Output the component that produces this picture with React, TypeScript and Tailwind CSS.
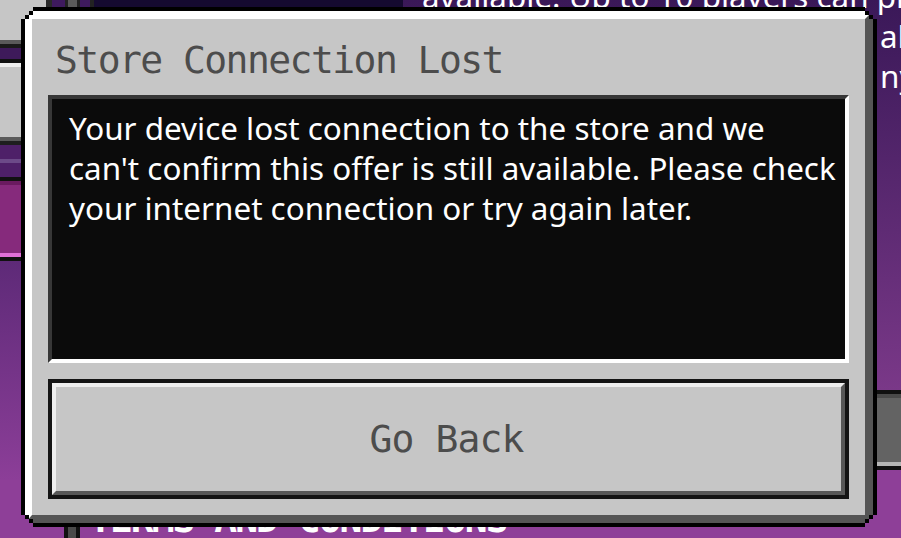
import React from 'react';

const pixelFont = "font-['DejaVu_Sans_Mono','Liberation_Mono',monospace]";
const bodyFont = "font-['Noto_Sans','Open_Sans',sans-serif]";

function SideMenu() {
  return (
    <div className="w-[403px] h-full flex flex-col shrink-0">
      <div className="h-[40px] flex">
        <div className="w-[46px] bg-[#c6c6c6]" />
        <div className="w-[6px] bg-[#2a2a2a]" />
        <div className="w-[13px] bg-[#3e1a5e]" />
        <div className="w-[3px] bg-[#222]" />
        <div className="w-[9px] bg-[#5a5a5a]" />
        <div className="w-[3px] bg-[#222]" />
        <div className="w-[10px] bg-[#3e1a5e]" />
        <div className="w-[4px] bg-[#222]" />
        <div className="flex-1 bg-[#150a30]" />
      </div>
      <div className="h-1 bg-[#5a5a5a]" />
      <div className="h-1 bg-[#1a1a1a]" />
      <div className="h-[11px] bg-[#3e1a5a]" />
      <div className="h-1 bg-[#111]" />
      <div className="h-1 bg-[#eeeeee]" />
      <div className="h-[70px] bg-[#c6c6c6]" />
      <div className="h-1 bg-[#5a5a5a]" />
      <div className="h-1 bg-[#1e1e1e]" />
      <div className="h-[14px] bg-[#4e2068]" />
      <div className="h-1 bg-[#6c4a88]" />
      <div className="h-[14px] bg-[#4e2068]" />
      <div className="h-1 bg-[#111]" />
      <div className="h-1 bg-[#6a1a60]" />
      <div className="h-[68px] bg-[#862a7c]" />
      <div className="h-1 bg-[#e070d8]" />
      <div className="h-1 bg-[#111]" />
      <div className="flex-1 bg-linear-to-b from-[#5e2a78] to-[#8c3e98]" />
    </div>
  );
}

function OfferDetails() {
  return (
    <div className="flex-1 h-full flex flex-col overflow-hidden">
      <div className={`flex-1 bg-linear-to-b from-[#3a1858] to-[#7a3888] pl-[19px] text-white text-[31.4px] leading-[40px] whitespace-nowrap ${bodyFont}`}>
        <p className="-mt-6">available. Up to 10 players can play together.</p>
        <div className="flex">
          <span className="w-[458px] shrink-0">Stay online with addition</span>
          <span>al</span>
        </div>
        <div className="flex">
          <span className="w-[458px] shrink-0">Invite friends to join at a</span>
          <span>ny</span>
        </div>
      </div>
      <div className="h-[80px] border-y-4 border-t-[#111] border-b-[#111] flex flex-col">
        <div className="h-1 bg-[#4a4a4a]" />
        <div className="flex-1 bg-[#636363]" />
        <div className="h-1 bg-[#b5b5b5]" />
      </div>
      <div className="h-[10px] bg-[#8e3f98]" />
    </div>
  );
}

function ConnectionLostDialog() {
  return (
    <div className="absolute left-[21px] top-[7px] w-[856px] h-[520px] bg-black p-1 [clip-path:polygon(0_12px,4px_12px,4px_8px,8px_8px,8px_4px,12px_4px,12px_0,844px_0,844px_4px,848px_4px,848px_8px,852px_8px,852px_12px,856px_12px,856px_508px,852px_508px,852px_512px,848px_512px,848px_516px,844px_516px,844px_520px,12px_520px,12px_516px,8px_516px,8px_512px,4px_512px,4px_508px,0_508px)]">
      <div className="w-full h-full bg-[#c6c6c6] border-8 border-l-[7px] border-t-white border-l-white border-r-[#555555] border-b-[#555555] flex flex-col px-4 pb-4 [clip-path:polygon(0_8px,4px_8px,4px_4px,8px_4px,8px_0,840px_0,840px_4px,844px_4px,844px_8px,848px_8px,848px_504px,844px_504px,844px_508px,840px_508px,840px_512px,8px_512px,8px_508px,4px_508px,4px_504px,0_504px)]">
        <div className="h-[76px] flex items-center pl-[7px] pt-[6px]">
          <h1 className={`text-[38px] leading-none tracking-[-1.55px] text-[#4c4c4c] ${pixelFont}`}>
            Store Connection Lost
          </h1>
        </div>
        <div className="h-[268px] border-4 border-t-[#373737] border-l-[#373737] border-r-white border-b-white bg-[#0b0b0b] pl-[17px] pt-[9px]">
          <p className={`text-white text-[31.4px] leading-[40px] ${bodyFont}`}>
            Your device lost connection to the store and we
            <br />
            can't confirm this offer is still available. Please check
            <br />
            your internet connection or try again later.
          </p>
        </div>
        <button className="mt-4 h-[120px] border-4 border-[#141414] bg-[#c6c6c6]">
          <div className="w-full h-full border-4 border-t-[#eeeeee] border-l-[#eeeeee] border-r-[#585858] border-b-[#585858] flex items-center justify-center pr-[4px]">
            <span className={`text-[38px] leading-none tracking-[-0.9px] text-[#4c4c4c] ${pixelFont}`}>
              Go Back
            </span>
          </div>
        </button>
      </div>
    </div>
  );
}

export default function App() {
  return (
    <div className="relative w-[901px] h-[538px] overflow-hidden flex flex-col bg-[#8e3f98]">
      <div className="h-[500px] flex">
        <SideMenu />
        <OfferDetails />
      </div>
      <div className="flex-1 flex bg-[#8e3f98]">
        <div className="ml-[64px] w-4 border-x-4 border-[#111] bg-[#4a4a4a]" />
        <p className={`ml-[9px] mt-[20px] text-white font-bold text-[38px] leading-none tracking-[-2px] ${pixelFont}`}>
          TERMS AND CONDITIONS
        </p>
      </div>
      <ConnectionLostDialog />
    </div>
  );
}
